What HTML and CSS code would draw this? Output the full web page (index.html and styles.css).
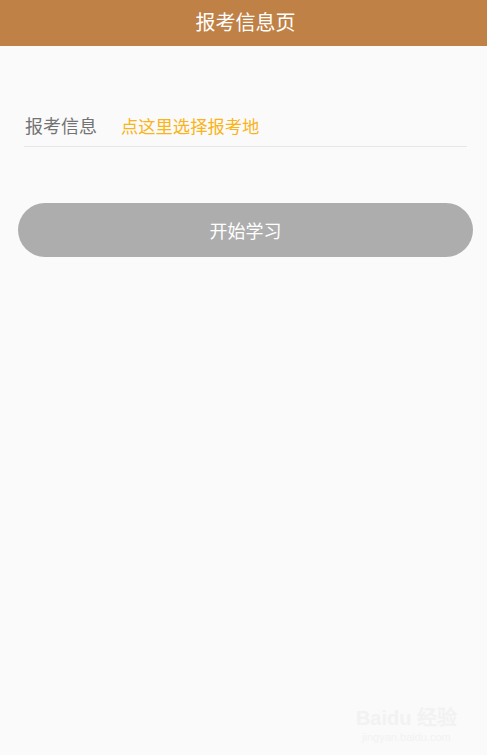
FILE: index.html
```html
<!DOCTYPE html>
<html lang="zh-CN">
<head>
<meta charset="utf-8">
<title>报考信息页</title>
<link rel="stylesheet" href="styles.css">
</head>
<body>
<header class="topbar">报考信息页</header>
<main class="content">
  <div class="form-row">
    <span class="label">报考信息</span>
    <span class="value">点这里选择报考地</span>
  </div>
  <button class="start-btn" type="button">开始学习</button>
</main>
<div class="watermark">
  <span class="wm-logo">Baidu 经验</span>
  <span class="wm-url">jingyan.baidu.com</span>
</div>
</body>
</html>
```

FILE: styles.css
```css
html, body {
  margin: 0;
  padding: 0;
  height: 100%;
}
body {
  background: #fafafa;
  font-family: "Noto Sans CJK SC", "Noto Sans", sans-serif;
  position: relative;
  overflow: hidden;
}
.topbar {
  height: 46px;
  background: #bf8146;
  color: #ffffff;
  font-size: 20px;
  line-height: 44px;
  text-align: center;
  padding-left: 4px;
}
.content {
  display: flex;
  flex-direction: column;
  padding-top: 57px;
}
.form-row {
  display: flex;
  align-items: center;
  height: 42px;
  margin: 0 20px 0 24px;
  border-bottom: 1px solid #e6e6e6;
  padding-top: 1px;
}
.label {
  color: #737373;
  font-size: 18px;
  padding-left: 1px;
  width: 96px;
}
.value {
  color: #fbb318;
  font-size: 17.3px;
}
.start-btn {
  margin: 56px 14px 0 18px;
  height: 54px;
  border: none;
  border-radius: 27px;
  background: #adadad;
  color: #ffffff;
  font-family: inherit;
  font-size: 18px;
  padding: 0;
}
.watermark {
  position: absolute;
  right: 30px;
  bottom: 12px;
  display: flex;
  flex-direction: column;
  align-items: center;
  color: #f2f2f2;
  font-family: "Liberation Sans", sans-serif;
}
.wm-logo {
  font-size: 20px;
  font-weight: bold;
}
.wm-url {
  font-size: 11px;
}
```
